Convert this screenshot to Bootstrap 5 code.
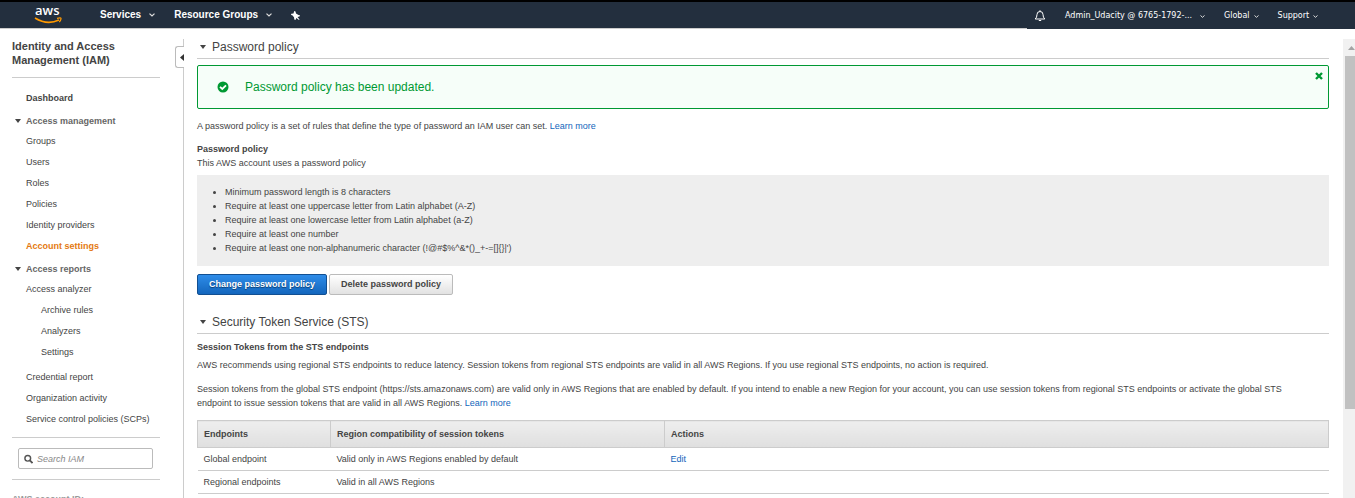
<!DOCTYPE html>
<html lang="en">
<head>
<meta charset="utf-8">
<meta name="viewport" content="width=device-width, initial-scale=1">
<title>IAM Management Console</title>
<link href="https://cdn.jsdelivr.net/npm/bootstrap@5.3.0/dist/css/bootstrap.min.css" rel="stylesheet">
<style>
  body { font-family: "Liberation Sans", Arial, sans-serif; font-size: 9px; line-height: 14px; color: #444; background: #fff; }
  a { color: #1166bb; text-decoration: none; }
  h1, h2, h3, p, ul { margin: 0; font-size: inherit; line-height: inherit; }

  /* top bar */
  .topbar { border-top: 2px solid #000; background: #232f3e; height: 29px; }
  .topbar-main { border-bottom: 1px solid #ccc; padding-left: 35px; gap: 19px; }
  .topbar-user { width: 328px; padding: 1px 0 0 7px; gap: 19px; }
  .topbar button { border: 0; padding: 0; background: none; color: #fff; display: flex; align-items: center; white-space: nowrap; }
  .topbar-main button { font-weight: bold; font-size: 10px; }
  .topbar-user button { font-family: "DejaVu Sans", Verdana, sans-serif; font-size: 8px; }
  .brand { width: 28px; margin-right: 18px; }
  .topbar svg { display: block; overflow: visible; }

  /* sidebar */
  .sidebar { width: 183px; flex: none; padding: 10px 0 0 12px; }
  .sidebar h1 { font-size: 11px; font-weight: bold; line-height: 14px; margin-bottom: 10px; }
  .rule { height: 1px; background: #ccc; margin-right: 23px; }
  .side-nav { padding: 10px 0 7px; }
  .side-link { display: block; line-height: 21px; padding-left: 14px; color: #444; }
  .side-sub { padding-left: 29px; }
  .side-link.current { color: #e47911; font-weight: bold; }
  .side-head { display: flex; align-items: center; gap: 5px; width: 100%; height: 20px; margin-top: 2px; padding: 0 0 0 3px; border: 0; background: none; font-weight: bold; color: #666; }
  .caret-mark { width: 6px; flex: none; border: 3px solid transparent; border-top: 4px solid #444; border-bottom: 0; }
  .search-box { width: 135px; height: 21px; border: 1px solid #bbb; border-radius: 2px; padding: 0 5px; gap: 4px; margin: 10px 0 10px 6px; }
  .search-box input { border: 0; padding: 0; outline: 0; width: 100%; min-width: 0; font-style: italic; background: none; }
  .search-box input::placeholder { color: #888; opacity: 1; }
  .account-label { font-weight: bold; color: #999; }

  /* pane divider and its collapse handle */
  .divider-pane { margin-top: 10px; border-left: 1px solid #ccc; position: relative; min-width: 0; }
  .collapse-tab { position: absolute; left: -9px; top: 7px; width: 9px; height: 22px; padding: 0; border: 1px solid #bbb; border-right: 0; border-radius: 3px 0 0 3px; background: #fff; }
  .collapse-tab svg { display: block; margin-left: 4px; }

  /* content */
  .content-pane { padding: 0 14px 0 13px; min-width: 0; }
  .section-head { display: flex; align-items: center; gap: 6px; height: 20px; width: 100%; padding: 0 0 4px 3px; border: 0; border-bottom: 1px solid #ccc; background: none; font-size: 12px; color: #444; }
  .sts-head { margin-top: 19px; margin-bottom: 6px; }
  .notice { border: 1px solid #093; border-radius: 2px; background: #f6fef9; height: 44px; color: #093; font-size: 12px; padding: 0 5px 0 19px; margin: 6px 0 10px; }
  .notice button { border: 0; padding: 0; background: none; align-self: flex-start; margin-top: 6px; }
  .notice svg { display: block; }
  .policy-title { margin-top: 9px; }
  .rules { background: #eee; padding: 10px 0 11px 28px; margin-top: 5px; }
  .actions { gap: 2px; }
  .act { border: 1px solid #bbb; border-radius: 2px; height: 21px; padding: 0 11px; font-weight: bold; font-size: 9px; line-height: 19px; color: #444; background: linear-gradient(#fff, #e2e2e2); }
  .act-main { border-color: #124f91; color: #fff; background: linear-gradient(#2e8ce8, #1366bd); text-shadow: 0 1px 1px #0b3c70; }
  .endpoint-note { margin: 10px 0; }
  .grid-table { width: 100%; table-layout: fixed; border-collapse: collapse; }
  .grid-table th { height: 27px; border: 1px solid #ccc; padding: 0 6px; background: linear-gradient(#eee, #dfdfdf); }
  .grid-table td { height: 23px; border-bottom: 1px solid #ccc; padding: 0 6px; }

  /* scroll bar */
  .scroll-track { width: 12px; flex: none; background: #f1f1f1; margin-top: 10px; padding-left: 2px; }
  .scroll-thumb { height: 77%; background: #c1c1c1; }
  .scroll-up { height: 17px; flex: none; padding: 7px 0 0 3px; }
  .scroll-up svg { display: block; }
</style>
</head>
<body class="vh-100 d-flex flex-column overflow-hidden">

<header class="topbar d-flex flex-shrink-0">
  <nav class="topbar-main flex-grow-1 d-flex align-items-center" aria-label="Services">
    <a class="brand" href="#" aria-label="aws">
      <svg width="28" height="20" viewBox="0 0 28 20">
        <text x="0" y="10" font-family="Open Sans" font-size="13" font-weight="600" fill="#fff">aws</text>
        <path d="M0 13 Q12 20.500 24 15" fill="none" stroke="#f90" stroke-width="1.600"/>
        <path d="M22 13.300 q4.500 -1 4 .5 q-.3 2 -1.800 3.200" fill="none" stroke="#f90" stroke-width="1.200"/>
      </svg>
    </a>
    <button type="button">Services <svg class="ms-2" width="6" height="4" viewBox="0 0 6 4"><path d="M.5 .6 L3 3 L5.500 .6" fill="none" stroke="#ddd" stroke-width="1.200"/></svg></button>
    <button type="button">Resource Groups <svg class="ms-2" width="6" height="4" viewBox="0 0 6 4"><path d="M.5 .6 L3 3 L5.500 .6" fill="none" stroke="#ddd" stroke-width="1.200"/></svg></button>
    <button type="button" aria-label="Pin shortcuts"><svg width="9" height="9" viewBox="0 0 9 9" fill="#fff"><path d="M3.200 0 L4.500 .5 L5 2.500 L7.500 4 L9 4.200 L8.500 5.500 L6.500 6 L8.500 8.600 L8 9 L5.300 6.900 L4.500 9 L3.300 8.500 L3 6.300 L1.300 4.200 L0 4 L.3 2.800 L2.500 2.600 Z"/></svg></button>
  </nav>
  <nav class="topbar-user d-flex align-items-center" aria-label="Account">
    <button type="button" aria-label="Notifications"><svg width="12" height="12" viewBox="0 0 12 12" fill="none" stroke="#fff"><path d="M1.200 9 Q3 7.500 3 4.500 Q3 1.500 6 1.500 Q9 1.500 9 4.500 Q9 7.500 10.800 9 Z M4.800 10.500 h2.400 M6 .2 v1.300"/></svg></button>
    <button type="button">Admin_Udacity @ 6765-1792-... <svg class="ms-2" width="5" height="3" viewBox="0 0 5 3"><path d="M.5 .5 L2.500 2.300 L4.500 .5" fill="none" stroke="#ddd"/></svg></button>
    <button type="button">Global <svg class="ms-1" width="5" height="3" viewBox="0 0 5 3"><path d="M.5 .5 L2.500 2.300 L4.500 .5" fill="none" stroke="#ddd"/></svg></button>
    <button type="button">Support <svg class="ms-1" width="5" height="3" viewBox="0 0 5 3"><path d="M.5 .5 L2.500 2.300 L4.500 .5" fill="none" stroke="#ddd"/></svg></button>
  </nav>
</header>

<div class="d-flex flex-grow-1 overflow-hidden">
  <aside class="sidebar">
    <h1>Identity and Access<br>Management (IAM)</h1>
    <div class="rule"></div>
    <nav class="side-nav" aria-label="IAM">
      <a class="side-link fw-bold" href="#">Dashboard</a>
      <button type="button" class="side-head"><span class="caret-mark"></span>Access management</button>
      <a class="side-link" href="#">Groups</a>
      <a class="side-link" href="#">Users</a>
      <a class="side-link" href="#">Roles</a>
      <a class="side-link" href="#">Policies</a>
      <a class="side-link" href="#">Identity providers</a>
      <a class="side-link current" href="#" aria-current="page">Account settings</a>
      <button type="button" class="side-head"><span class="caret-mark"></span>Access reports</button>
      <a class="side-link" href="#">Access analyzer</a>
      <a class="side-link side-sub" href="#">Archive rules</a>
      <a class="side-link side-sub" href="#">Analyzers</a>
      <a class="side-link side-sub mb-1" href="#">Settings</a>
      <a class="side-link" href="#">Credential report</a>
      <a class="side-link" href="#">Organization activity</a>
      <a class="side-link" href="#">Service control policies (SCPs)</a>
    </nav>
    <div class="rule"></div>
    <label class="search-box d-flex align-items-center">
      <svg width="10" height="10" viewBox="0 0 10 10" fill="none" stroke="#555" stroke-width="1.600"><circle cx="4.200" cy="4.200" r="3.200"/><path d="M6.500 6.500 L9.500 9.500" stroke-width="2"/></svg>
      <input type="text" placeholder="Search IAM" aria-label="Search IAM">
    </label>
    <div class="rule"></div>
    <div class="account-label pt-2 mt-1">AWS account ID:</div>
  </aside>

  <div class="divider-pane flex-grow-1">
    <button type="button" class="collapse-tab" aria-label="Collapse sidebar"><svg width="4" height="7" viewBox="0 0 4 7"><path d="M4 0 V7 L0 3.500 Z" fill="#333"/></svg></button>
    <main class="content-pane">
      <button type="button" class="section-head"><span class="caret-mark"></span>Password policy</button>
      <div class="notice d-flex align-items-center" role="status">
        <svg class="me-3" width="12" height="12" viewBox="0 0 12 12"><circle cx="6" cy="6" r="5.500" fill="#093"/><path d="M3 5.800 L5.300 8 L9 4.300" fill="none" stroke="#fff" stroke-width="1.800"/></svg>
        <span class="flex-grow-1">Password policy has been updated.</span>
        <button type="button" aria-label="Dismiss"><svg width="8" height="8" viewBox="0 0 8 8"><path d="M1 1 L7 7 M7 1 L1 7" stroke="#093" stroke-width="2.400"/></svg></button>
      </div>
      <p>A password policy is a set of rules that define the type of password an IAM user can set. <a href="#">Learn more</a></p>
      <h3 class="policy-title fw-bold">Password policy</h3>
      <p>This AWS account uses a password policy</p>
      <ul class="rules">
        <li>Minimum password length is 8 characters</li>
        <li>Require at least one uppercase letter from Latin alphabet (A-Z)</li>
        <li>Require at least one lowercase letter from Latin alphabet (a-Z)</li>
        <li>Require at least one number</li>
        <li>Require at least one non-alphanumeric character (!@#$%^&amp;*()_+-=[]{}|')</li>
      </ul>
      <div class="actions d-flex mt-2">
        <button type="button" class="act act-main">Change password policy</button>
        <button type="button" class="act">Delete password policy</button>
      </div>
      <button type="button" class="section-head sts-head"><span class="caret-mark"></span>Security Token Service (STS)</button>
      <h3 class="fw-bold mb-1">Session Tokens from the STS endpoints</h3>
      <p>AWS recommends using regional STS endpoints to reduce latency. Session tokens from regional STS endpoints are valid in all AWS Regions. If you use regional STS endpoints, no action is required.</p>
      <p class="endpoint-note pe-4">Session tokens from the global STS endpoint (https://sts.amazonaws.com) are valid only in AWS Regions that are enabled by default. If you intend to enable a new Region for your account, you can use session tokens from regional STS endpoints or activate the global STS endpoint to issue session tokens that are valid in all AWS Regions. <a href="#">Learn more</a></p>
      <table class="grid-table">
        <colgroup><col style="width:133px"><col style="width:334px"><col></colgroup>
        <thead><tr><th scope="col">Endpoints</th><th scope="col">Region compatibility of session tokens</th><th scope="col">Actions</th></tr></thead>
        <tbody>
          <tr><td>Global endpoint</td><td>Valid only in AWS Regions enabled by default</td><td><a href="#">Edit</a></td></tr>
          <tr><td>Regional endpoints</td><td>Valid in all AWS Regions</td><td></td></tr>
        </tbody>
      </table>
    </main>
  </div>

  <div class="scroll-track d-flex flex-column" aria-hidden="true">
    <div class="scroll-up"><svg width="7" height="4" viewBox="0 0 7 4"><path d="M0 4 L3.500 0 L7 4 Z" fill="#a3a3a3"/></svg></div>
    <div class="scroll-thumb"></div>
  </div>
</div>
<script src="https://cdn.jsdelivr.net/npm/bootstrap@5.3.0/dist/js/bootstrap.bundle.min.js"></script>
</body>
</html>
